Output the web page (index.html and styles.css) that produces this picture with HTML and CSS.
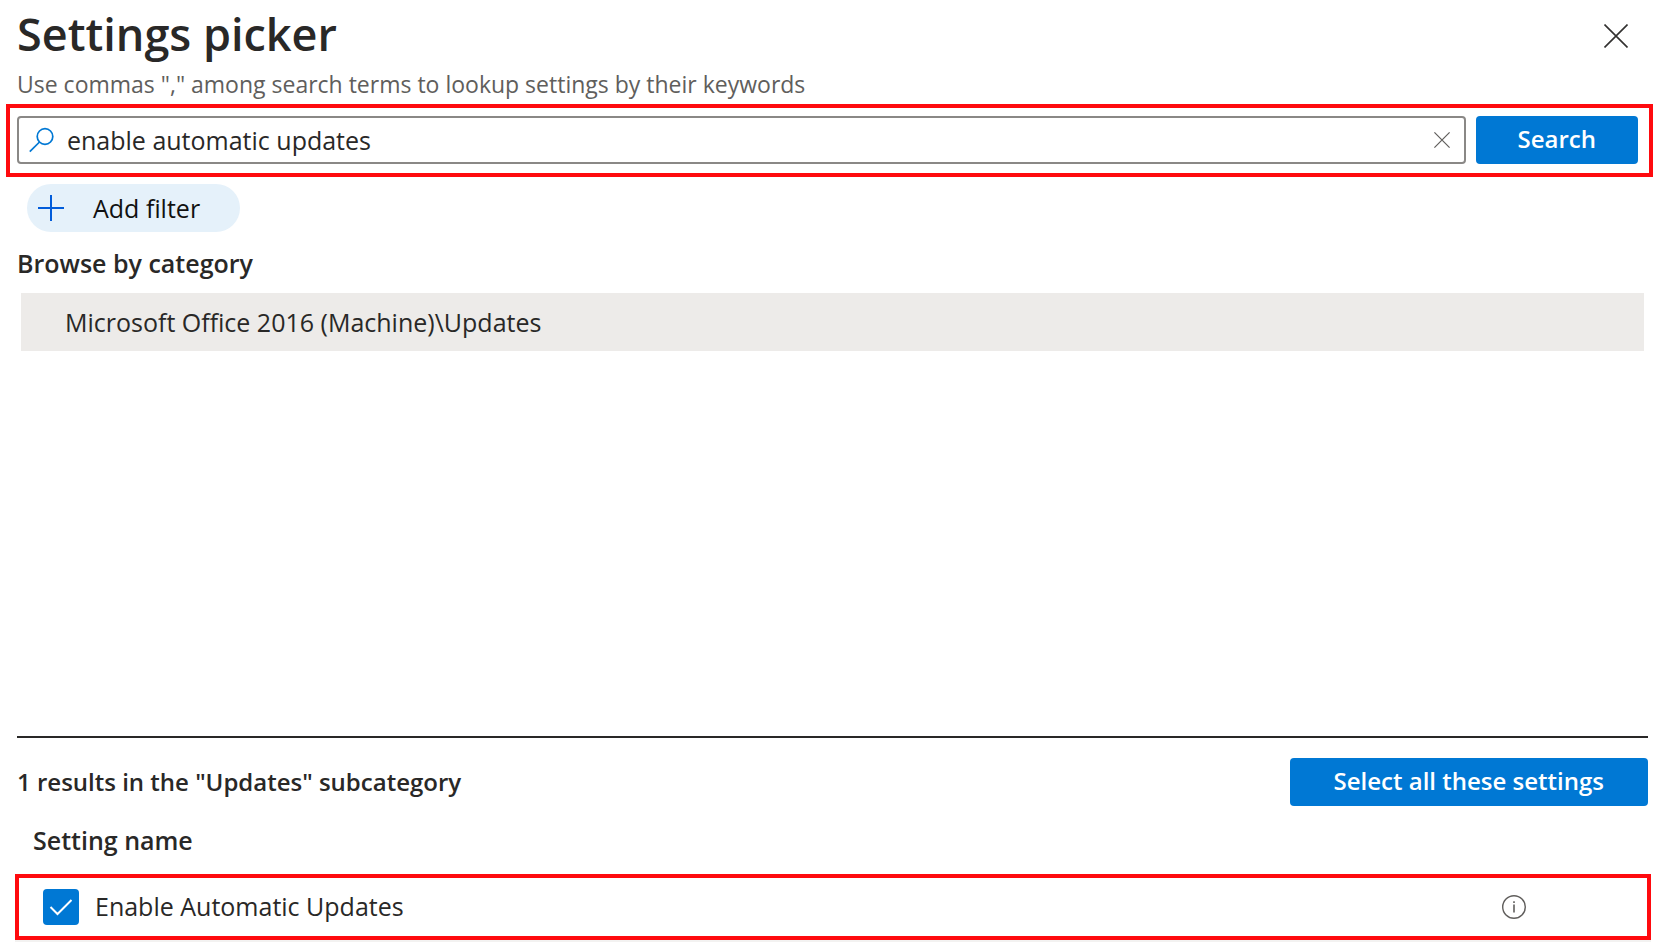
FILE: index.html
```html
<!DOCTYPE html>
<html lang="en">
<head>
    <meta charset="UTF-8">
    <meta name="viewport" content="width=device-width, initial-scale=1.0">
    <title>Settings picker</title>
    <link rel="stylesheet" href="styles.css">
</head>
<body>
    <div class="picker">
        <header class="picker-header">
            <div>
                <h1>Settings picker</h1>
                <p class="subtitle">Use commas "," among search terms to lookup settings by their keywords</p>
            </div>
            <button class="icon-button close-button" type="button" aria-label="Close">
                <svg width="24" height="24" viewBox="0 0 24 24"><path d="M.5.5l23 23M23.5.5l-23 23" stroke="#323130" stroke-width="1.6"/></svg>
            </button>
        </header>

        <form class="search-bar highlight">
            <div class="search-box">
                <svg width="26" height="26" viewBox="0 0 26 26" fill="none" stroke="#0078d4" stroke-width="1.7"><circle cx="16" cy="9.500" r="7.800"/><path d="M10.500 15L.8 24.700"/></svg>
                <input type="text" id="search" aria-label="Search settings" value="enable automatic updates">
                <button class="icon-button" type="button" aria-label="Clear search">
                    <svg width="16" height="16" viewBox="0 0 16 16"><path d="M.4.4l15.200 15.200M15.600.4L.4 15.600" stroke="#605e5c" stroke-width="1.200"/></svg>
                </button>
            </div>
            <button class="primary-button" type="submit">Search</button>
        </form>

        <button class="filter-button" type="button">
            <svg width="26" height="26" viewBox="0 0 26 26"><path d="M13 0v26M0 13h26" stroke="#015cda" stroke-width="2"/></svg>
            Add filter
        </button>

        <section class="categories">
            <h2>Browse by category</h2>
            <button class="category" type="button">Microsoft Office 2016 (Machine)\Updates</button>
        </section>

        <section class="results">
            <div class="results-header">
                <h2>1 results in the "Updates" subcategory</h2>
                <button class="primary-button" type="button">Select all these settings</button>
            </div>
            <h3>Setting name</h3>
            <div class="setting highlight">
                <input type="checkbox" id="auto-updates" checked>
                <label for="auto-updates">Enable Automatic Updates</label>
                <button class="icon-button" type="button" aria-label="More information">
                    <svg width="24" height="24" viewBox="0 0 24 24" fill="none" stroke="#605e5c"><circle cx="12" cy="12" r="11.300" stroke-width="1.400"/><path d="M12 9.500v8M12 6.200v1.800" stroke-width="1.600"/></svg>
                </button>
            </div>
        </section>
    </div>
</body>
</html>
```
FILE: styles.css
```css
* {
    box-sizing: border-box;
}
body {
    margin: 0;
    font-family: "Open Sans", "Noto Sans", sans-serif;
    font-size: 25px;
    line-height: 32px;
    color: #292827;
    background-color: #fff;
}
h1, h2, h3, p {
    margin: 0;
}
h1 {
    margin-bottom: 4px;
    font-size: 45px;
    line-height: 60px;
    font-weight: 600;
}
h2, h3 {
    font-size: 25px;
    font-weight: 600;
}
button, input {
    font: inherit;
    color: inherit;
}
button {
    border: none;
    cursor: pointer;
}
svg {
    display: block;
    flex-shrink: 0;
}
.picker {
    display: flex;
    flex-direction: column;
    min-height: 100vh;
    padding: 4px 15px 8px;
}
.picker-header {
    display: flex;
    justify-content: space-between;
    align-items: flex-start;
    padding: 0 23px 4px 2px;
}
.subtitle {
    font-size: 23px;
    color: #605e5c;
}
.icon-button {
    padding: 0;
    background: none;
}
.close-button {
    margin-top: 20px;
}
.highlight {
    border: 4px solid #ff0a0e;
}
.search-bar {
    display: flex;
    gap: 10px;
    margin: 0 -2px 0 -9px;
    padding: 8px 11px 9px 7px;
}
.search-box {
    flex: 1;
    display: flex;
    align-items: center;
    gap: 12px;
    height: 48px;
    padding: 0 14px 0 10px;
    border: 2px solid #8a8886;
    border-radius: 4px;
}
.search-box input {
    flex: 1;
    min-width: 0;
    padding: 0;
    border: none;
    outline: none;
    background: none;
}
.primary-button {
    height: 48px;
    padding: 0 42px 2px;
    border-radius: 4px;
    background-color: #0078d4;
    color: #fff;
    font-size: 24px;
    font-weight: 600;
}
.primary-button:hover {
    background-color: #106ebe;
}
.filter-button {
    display: flex;
    align-items: center;
    align-self: flex-start;
    gap: 29px;
    height: 48px;
    margin: 7px 12px 0;
    padding: 0 40px 0 11px;
    border-radius: 24px;
    background-color: #e5f1fa;
    color: #111;
}
.categories {
    flex: 1;
    padding: 15px 7px 0 2px;
}
.category {
    display: block;
    width: calc(100% - 4px);
    margin: 14px 0 0 4px;
    padding: 13px 44px;
    background-color: #edebe9;
    text-align: left;
}
.results-header {
    display: flex;
    justify-content: space-between;
    align-items: center;
    margin: 0 3px 0 2px;
    padding: 20px 0 18px;
    border-top: 2px solid #292827;
}
.results-header h2 {
    font-size: 24px;
}
.results-header .primary-button {
    padding: 0 44px 2px;
}
.results h3 {
    padding-left: 18px;
    margin-bottom: 18px;
}
.setting {
    display: flex;
    align-items: center;
    gap: 16px;
    height: 66px;
    padding: 0 121px 0 24px;
    box-shadow: 0 2px #f3f2f1;
}
.setting label {
    flex: 1;
    padding-bottom: 2px;
}
.setting input {
    appearance: none;
    width: 36px;
    height: 36px;
    margin: 0;
    border-radius: 4px;
    background: #0078d4 url("data:image/svg+xml,%3Csvg xmlns='http://www.w3.org/2000/svg' viewBox='0 0 36 36'%3E%3Cpath d='M7.500 18l7 7L28.500 11' fill='none' stroke='white' stroke-width='2'/%3E%3C/svg%3E");
}
.setting input:not(:checked) {
    background: #fff;
    border: 2px solid #323130;
}
```
